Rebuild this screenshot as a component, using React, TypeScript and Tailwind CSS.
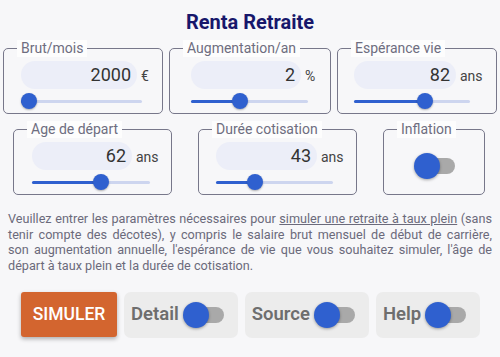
import React from "react";

type Field = {
  label: string;
  value: string;
  unit: string;
  pct: number;
  box: string;
  pill: string;
  slider: string;
  pad: string;
};

const row1: Field[] = [
  { label: "Brut/mois", value: "2000", unit: "€", pct: 0, box: "w-[160px]", pill: "w-[116px]", slider: "w-[121px]", pad: "pl-[17px]" },
  { label: "Augmentation/an", value: "2", unit: "%", pct: 0.41, box: "w-[162px]", pill: "w-[110px]", slider: "w-[117px]", pad: "pl-[21px]" },
  { label: "Espérance vie", value: "82", unit: "ans", pct: 0.63, box: "w-[160px]", pill: "w-[102px]", slider: "w-[116px]", pad: "pl-[16px]" },
];

const row2: Field[] = [
  { label: "Age de départ", value: "62", unit: "ans", pct: 0.6, box: "w-[159px]", pill: "w-[100px]", slider: "w-[118px]", pad: "pl-[18px]" },
  { label: "Durée cotisation", value: "43", unit: "ans", pct: 0.31, box: "w-[159px]", pill: "w-[101px]", slider: "w-[117px]", pad: "pl-[17px]" },
];

function Slider({ pct, className }: { pct: number; className: string }) {
  return (
    <div className={`relative h-[22px] ${className}`}>
      <div className="absolute left-0 right-0 top-[10px] h-[3px] rounded-full bg-[#cdd5ef]" />
      <div
        className="absolute left-0 top-[10px] h-[3px] rounded-full bg-[#2f60cf]"
        style={{ width: `calc(8px + ${pct} * (100% - 16px))` }}
      />
      <div
        className="absolute top-[3px] h-4 w-4 rounded-full bg-[#2f60cf] shadow-[0_1px_2px_rgba(0,0,0,0.3)]"
        style={{ left: `calc(${pct} * (100% - 16px))` }}
      />
    </div>
  );
}

function Toggle() {
  return (
    <div className="relative h-[26px] w-[41px] shrink-0">
      <div className="absolute right-0 top-[5px] h-4 w-9 rounded-full bg-[#a9a9a9]" />
      <div className="absolute left-0 top-0 h-[26px] w-[26px] rounded-full bg-[#2f60cf] shadow-[0_1px_3px_rgba(0,0,0,0.35)]" />
    </div>
  );
}

function Box({ label, className, children }: { label: string; className: string; children: React.ReactNode }) {
  return (
    <fieldset className={`rounded-[5px] border-[1.5px] border-[#77778a] ${className}`}>
      <legend className="ml-[13px] bg-[#fdfdfd] px-1 text-[14px] leading-[17px] text-[#6e6d80]">{label}</legend>
      {children}
    </fieldset>
  );
}

function FieldBox({ f }: { f: Field }) {
  return (
    <Box label={f.label} className={f.box}>
      <div className={`pt-[4px] ${f.pad}`}>
        <div className="flex items-baseline gap-[4px]">
          <div className={`h-[28px] rounded-full bg-[#eceef8] pr-[6px] text-right text-[18px] leading-[28px] text-[#333] ${f.pill}`}>
            {f.value}
          </div>
          <span className="text-[14px] text-[#444]">{f.unit}</span>
        </div>
        <Slider pct={f.pct} className={`mt-[1px] mb-[1px] ${f.slider}`} />
      </div>
    </Box>
  );
}

export default function App() {
  return (
    <div className="h-[357px] w-[500px] overflow-hidden bg-[#f7f7f9] font-['Roboto',sans-serif]">
      <h1 className="pt-[10px] text-center text-[20px] font-bold leading-[24px] text-[#17176b]">Renta Retraite</h1>

      <div className="mt-[6px] flex gap-[6px] pl-[3px]">
        {row1.map((f) => (
          <FieldBox key={f.label} f={f} />
        ))}
      </div>

      <div className="mt-[7px] flex gap-[26px] pl-[13px]">
        {row2.map((f) => (
          <FieldBox key={f.label} f={f} />
        ))}
        <Box label="Inflation" className="w-[102px]">
          <div className="flex h-[56px] items-center justify-center pl-[1px]">
            <Toggle />
          </div>
        </Box>
      </div>

      <div className="mt-[16px] px-2 text-[12.65px] leading-[15.5px] text-[#6b6a7b]">
        <p className="text-justify [text-align-last:justify]">
          Veuillez entrer les paramètres nécessaires pour <span className="underline">simuler une retraite à taux plein</span> (sans
        </p>
        <p className="text-justify [text-align-last:justify]">
          tenir compte des décotes), y compris le salaire brut mensuel de début de carrière,
        </p>
        <p className="text-justify [text-align-last:justify]">
          son augmentation annuelle, l'espérance de vie que vous souhaitez simuler, l'âge de
        </p>
        <p>départ à taux plein et la durée de cotisation.</p>
      </div>

      <div className="mt-[19px] flex gap-[7px] pl-[21px]">
        <button className="h-[45px] w-[96px] rounded-[3px] bg-[#d3652f] text-[17.5px] font-medium text-white shadow-[0_2px_4px_rgba(0,0,0,0.3)]">
          SIMULER
        </button>
        {["Detail", "Source", "Help"].map((t) => (
          <div key={t} className="flex h-[46px] items-center gap-1 rounded-[7px] bg-[#ececec] pl-[7px] pr-[14px]">
            <span className="text-[18.5px] font-semibold text-[#6e6e6e]">{t}</span>
            <Toggle />
          </div>
        ))}
      </div>
    </div>
  );
}
